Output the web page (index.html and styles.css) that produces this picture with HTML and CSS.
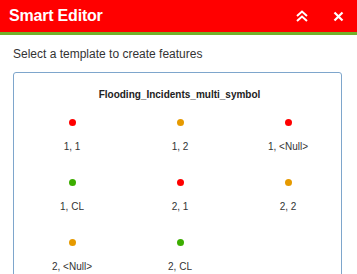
FILE: index.html
```html
<!DOCTYPE html>
<html lang="en">
<head>
    <meta charset="UTF-8">
    <title>Smart Editor</title>
    <link rel="stylesheet" href="styles.css">
</head>
<body>
    <div class="panel">
        <div class="title-bar">
            <span class="title">Smart Editor</span>
            <div class="title-buttons">
                <svg class="btn-icon" width="14" height="12" viewBox="0 0 14 12">
                    <path d="M2 6 L7 1.5 L12 6 M2 11 L7 6.5 L12 11" fill="none" stroke="#fff" stroke-width="2"/>
                </svg>
                <svg class="btn-icon" width="11" height="11" viewBox="0 0 11 11">
                    <path d="M1.5 1.5 L9.5 9.5 M9.5 1.5 L1.5 9.5" fill="none" stroke="#fff" stroke-width="2.2"/>
                </svg>
            </div>
        </div>
        <div class="content">
            <p class="hint">Select a template to create features</p>
            <div class="template-box">
                <div class="layer-name">Flooding_Incidents_multi_symbol</div>
                <div class="template-grid">
                    <div class="template"><span class="dot red"></span><span class="label">1, 1</span></div>
                    <div class="template"><span class="dot orange"></span><span class="label">1, 2</span></div>
                    <div class="template"><span class="dot red"></span><span class="label">1, &lt;Null&gt;</span></div>
                    <div class="template"><span class="dot green"></span><span class="label">1, CL</span></div>
                    <div class="template"><span class="dot red"></span><span class="label">2, 1</span></div>
                    <div class="template"><span class="dot orange"></span><span class="label">2, 2</span></div>
                    <div class="template"><span class="dot orange"></span><span class="label">2, &lt;Null&gt;</span></div>
                    <div class="template"><span class="dot green"></span><span class="label">2, CL</span></div>
                </div>
            </div>
        </div>
    </div>
</body>
</html>
```

FILE: styles.css
```css
body {
    margin: 0;
    font-family: 'Liberation Sans', Arial, sans-serif;
    background: #fff;
}
.panel {
    height: 274px;
    overflow: hidden;
}
.title-bar {
    height: 32px;
    background-color: #ff0000;
    border-bottom: 3px solid #72b02a;
    display: flex;
    align-items: center;
    justify-content: space-between;
    padding: 0 13px 0 9px;
}
.title {
    color: #fff;
    font-size: 16px;
    font-weight: bold;
    letter-spacing: -0.2px;
}
.title-buttons {
    display: flex;
    align-items: center;
    gap: 24px;
}
.btn-icon {
    display: block;
}
.content {
    padding: 0 15px 0 13px;
}
.hint {
    margin: 12px 0 11px;
    font-size: 12px;
    color: #333;
}
.template-box {
    border: 1px solid #7ea6cc;
    border-radius: 3px;
    height: 220px;
    padding: 0 0 0 4px;
}
.layer-name {
    text-align: center;
    font-size: 10px;
    font-weight: bold;
    color: #222;
    margin-top: 16px;
}
.template-grid {
    display: grid;
    grid-template-columns: repeat(3, 108px);
    grid-auto-rows: 60px;
    margin-top: 19px;
}
.template {
    display: flex;
    flex-direction: column;
    align-items: center;
}
.dot {
    width: 7px;
    height: 7px;
    border-radius: 50%;
}
.red { background: #ff0000; }
.orange { background: #e69a00; }
.green { background: #3cad00; }
.label {
    margin-top: 15px;
    font-size: 10px;
    color: #333;
}
```
